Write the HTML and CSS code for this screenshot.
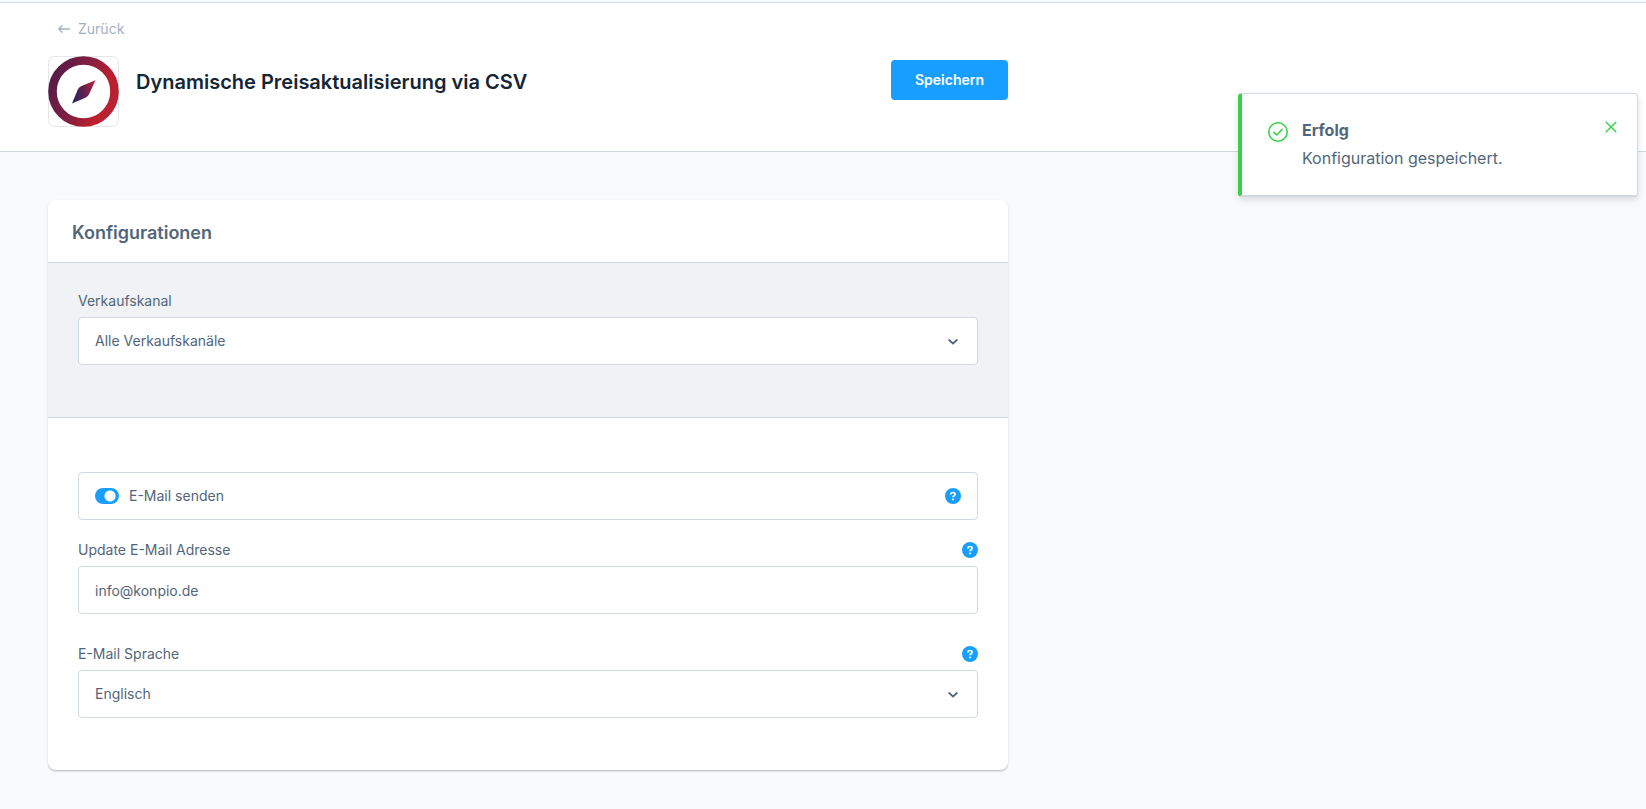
FILE: index.html
```html
<!DOCTYPE html>
<html lang="de">
<head>
<meta charset="utf-8">
<meta name="viewport" content="width=device-width, initial-scale=1">
<title>Dynamische Preisaktualisierung via CSV</title>
<link rel="stylesheet" href="styles.css">
</head>
<body>
<svg class="sprite" aria-hidden="true">
  <symbol id="help" viewBox="0 0 16 16">
    <circle cx="8" cy="8" r="8" fill="#189eff"/>
    <path d="M5.9 6.4C5.9 5.1 6.8 4.5 8 4.5s2.1.7 2.1 1.8c0 1.5-2.1 1.4-2.1 2.9" fill="none" stroke="#fff" stroke-width="1.7"/>
    <rect x="7.1" y="10.5" width="1.8" height="1.8" rx=".5" fill="#fff"/>
  </symbol>
  <symbol id="chevron" viewBox="0 0 10 6">
    <path d="M1.2 1 5 4.6 8.8 1" fill="none" stroke="#52667a" stroke-width="1.8" stroke-linecap="round" stroke-linejoin="round"/>
  </symbol>
</svg>

<header class="page-header">
  <div class="container">
    <a class="back" href="#">
      <svg width="12" height="8" viewBox="0 0 12 8" aria-hidden="true"><path d="M11.5 4H.8M4 .8.8 4 4 7.2" fill="none" stroke="#a3b2c2" stroke-width="1.3" stroke-linecap="round" stroke-linejoin="round"/></svg>
      Zurück
    </a>
    <div class="title-row">
      <svg class="logo" viewBox="0 0 71 71" aria-hidden="true">
        <defs>
          <linearGradient id="ring" x1="0" y1="0.3" x2="1" y2="0.7">
            <stop offset="0" stop-color="#581c46"/>
            <stop offset="0.45" stop-color="#861f40"/>
            <stop offset="0.8" stop-color="#bd1f2e"/>
            <stop offset="1" stop-color="#b82232"/>
          </linearGradient>
          <linearGradient id="needle" x1="0" y1="0.6" x2="1" y2="0.4">
            <stop offset="0" stop-color="#2a2560"/>
            <stop offset="0.45" stop-color="#562152"/>
            <stop offset="1" stop-color="#b8233a"/>
          </linearGradient>
        </defs>
        <rect x="0.5" y="0.5" width="70" height="70" rx="6" fill="#fff" stroke="#e6e6e8"/>
        <circle cx="35.5" cy="35.5" r="31" fill="none" stroke="url(#ring)" stroke-width="8.6"/>
        <path d="M24 47.5 29.8 33.5Q30.800 31 33.500 30L47.500 24.300 41.200 38Q40 40.800 37.500 41.800Z" fill="url(#needle)"/>
      </svg>
      <h1 class="title">Dynamische Preisaktualisierung via CSV</h1>
      <button class="save" type="button">Speichern</button>
    </div>
  </div>
</header>

<main class="content">
  <section class="card container">
    <h2 class="card-title">Konfigurationen</h2>
    <div class="section channel">
      <div class="field">
        <div class="label-row"><label for="channel">Verkaufskanal</label></div>
        <div class="select-wrap">
          <select class="control" id="channel"><option>Alle Verkaufskanäle</option></select>
          <svg class="chevron" aria-hidden="true"><use href="#chevron"/></svg>
        </div>
      </div>
    </div>
    <form class="section settings">
      <div class="switch-box">
        <input class="switch" type="checkbox" id="send" checked>
        <label for="send">E-Mail senden</label>
        <svg class="help" aria-hidden="true"><use href="#help"/></svg>
      </div>
      <div class="field">
        <div class="label-row"><label for="mail">Update E-Mail Adresse</label><svg class="help" aria-hidden="true"><use href="#help"/></svg></div>
        <input class="control" type="text" id="mail" value="info@konpio.de">
      </div>
      <div class="field">
        <div class="label-row"><label for="lang">E-Mail Sprache</label><svg class="help" aria-hidden="true"><use href="#help"/></svg></div>
        <div class="select-wrap">
          <select class="control" id="lang"><option>Englisch</option></select>
          <svg class="chevron" aria-hidden="true"><use href="#chevron"/></svg>
        </div>
      </div>
    </form>
  </section>
</main>

<aside class="toast" role="status">
  <svg class="toast-icon" viewBox="0 0 20 20" aria-hidden="true"><g fill="none" stroke="#37d046" stroke-width="1.6" stroke-linecap="round" stroke-linejoin="round"><circle cx="10" cy="10" r="9.2"/><path d="M5.8 10.3 8.6 13 14.3 7.3"/></g></svg>
  <div class="toast-body">
    <strong class="toast-title">Erfolg</strong>
    <p class="toast-text">Konfiguration gespeichert.</p>
  </div>
  <button class="toast-close" type="button" aria-label="Schließen"><svg width="12" height="12" viewBox="0 0 12 12" aria-hidden="true"><path d="M1.2 1.2 10.8 10.8M10.8 1.2 1.2 10.8" stroke="#37d046" stroke-width="1.4" stroke-linecap="round"/></svg></button>
</aside>
</body>
</html>
```

FILE: styles.css
```css
* { box-sizing: border-box; }

body {
  margin: 0;
  padding-top: 2px;
  min-height: 100vh;
  background: #f9fafb;
  color: #52667a;
  font: 14px/16px Inter, "Liberation Sans", sans-serif;
}

h1, h2, p { margin: 0; }
svg { display: block; flex: none; }
button, input, select { font: inherit; color: inherit; }

.sprite { position: absolute; width: 0; height: 0; }

.container {
  width: 100%;
  max-width: 960px;
}

.page-header {
  padding: 17px 48px 24px;
  border-top: 1px solid #d1d9e0;
  border-bottom: 1px solid #d1d9e0;
  background: #fff;
}

.back {
  display: inline-flex;
  align-items: center;
  gap: 8px;
  padding-left: 10px;
  color: #a3b2c2;
  text-decoration: none;
}

.title-row {
  display: flex;
  align-items: flex-start;
  margin-top: 19px;
}

.logo { width: 71px; height: 71px; }

.title {
  flex: 1;
  margin-left: 17px;
  padding-top: 12px;
  color: #142535;
  font-size: 20px;
  line-height: 28px;
  font-weight: 600;
}

.save {
  height: 40px;
  margin-top: 4px;
  padding: 0 24px;
  border: 0;
  border-radius: 4px;
  background: #189eff;
  color: #fff;
  font-weight: 600;
}

.content { padding: 48px 48px 38px; }

.card {
  border-radius: 8px;
  background: #fff;
  box-shadow: 0 1px 1px rgba(0, 0, 0, .1), 0 2px 1px rgba(0, 0, 0, .06), 0 1px 3px rgba(0, 0, 0, .1);
}

.card-title {
  padding: 21px 24px 17px;
  border-bottom: 1px solid #d1d9e0;
  color: #52667a;
  font-size: 18px;
  line-height: 24px;
  font-weight: 600;
}

.section { padding: 30px 30px 52px; }

.channel {
  border-bottom: 1px solid #d1d9e0;
  background: #f0f2f5;
}

.settings { padding-top: 54px; }

.label-row {
  display: flex;
  justify-content: space-between;
  align-items: center;
  height: 16px;
  margin-bottom: 8px;
}

.control {
  display: block;
  width: 100%;
  height: 48px;
  padding: 0 16px;
  border: 1px solid #d1d9e0;
  border-radius: 4px;
  background: #fff;
  appearance: none;
}

.select-wrap { position: relative; }

.chevron {
  position: absolute;
  top: 22px;
  right: 20px;
  width: 10px;
  height: 6px;
  pointer-events: none;
}

.help { width: 16px; height: 16px; }

.switch-box {
  display: flex;
  align-items: center;
  gap: 10px;
  height: 48px;
  padding: 0 16px;
  border: 1px solid #d1d9e0;
  border-radius: 4px;
}

.switch-box .help { margin-left: auto; }
.switch-box + .field { margin-top: 22px; }
.field + .field { margin-top: 32px; }

.switch {
  width: 24px;
  height: 16px;
  margin: 0;
  border-radius: 8px;
  background: radial-gradient(circle at 15px 8px, #fff 5px, #189eff 6px);
  appearance: none;
}

.toast {
  position: absolute;
  top: 93px;
  right: 8px;
  display: flex;
  align-items: flex-start;
  width: 400px;
  padding: 22px 20px 23px 26px;
  border: 1px solid #d1d9e0;
  border-left: 4px solid #37d046;
  border-bottom-width: 2px;
  border-radius: 4px;
  background: #fff;
  box-shadow: 0 3px 6px rgba(120, 135, 150, .25);
}

.toast-icon { width: 20px; height: 20px; margin-top: 6px; }
.toast-body { flex: 1; margin-left: 14px; font-size: 16px; line-height: 28px; }
.toast-title { display: block; font-weight: 700; }
.toast-close { margin-top: 5px; padding: 0; border: 0; background: none; }
```
